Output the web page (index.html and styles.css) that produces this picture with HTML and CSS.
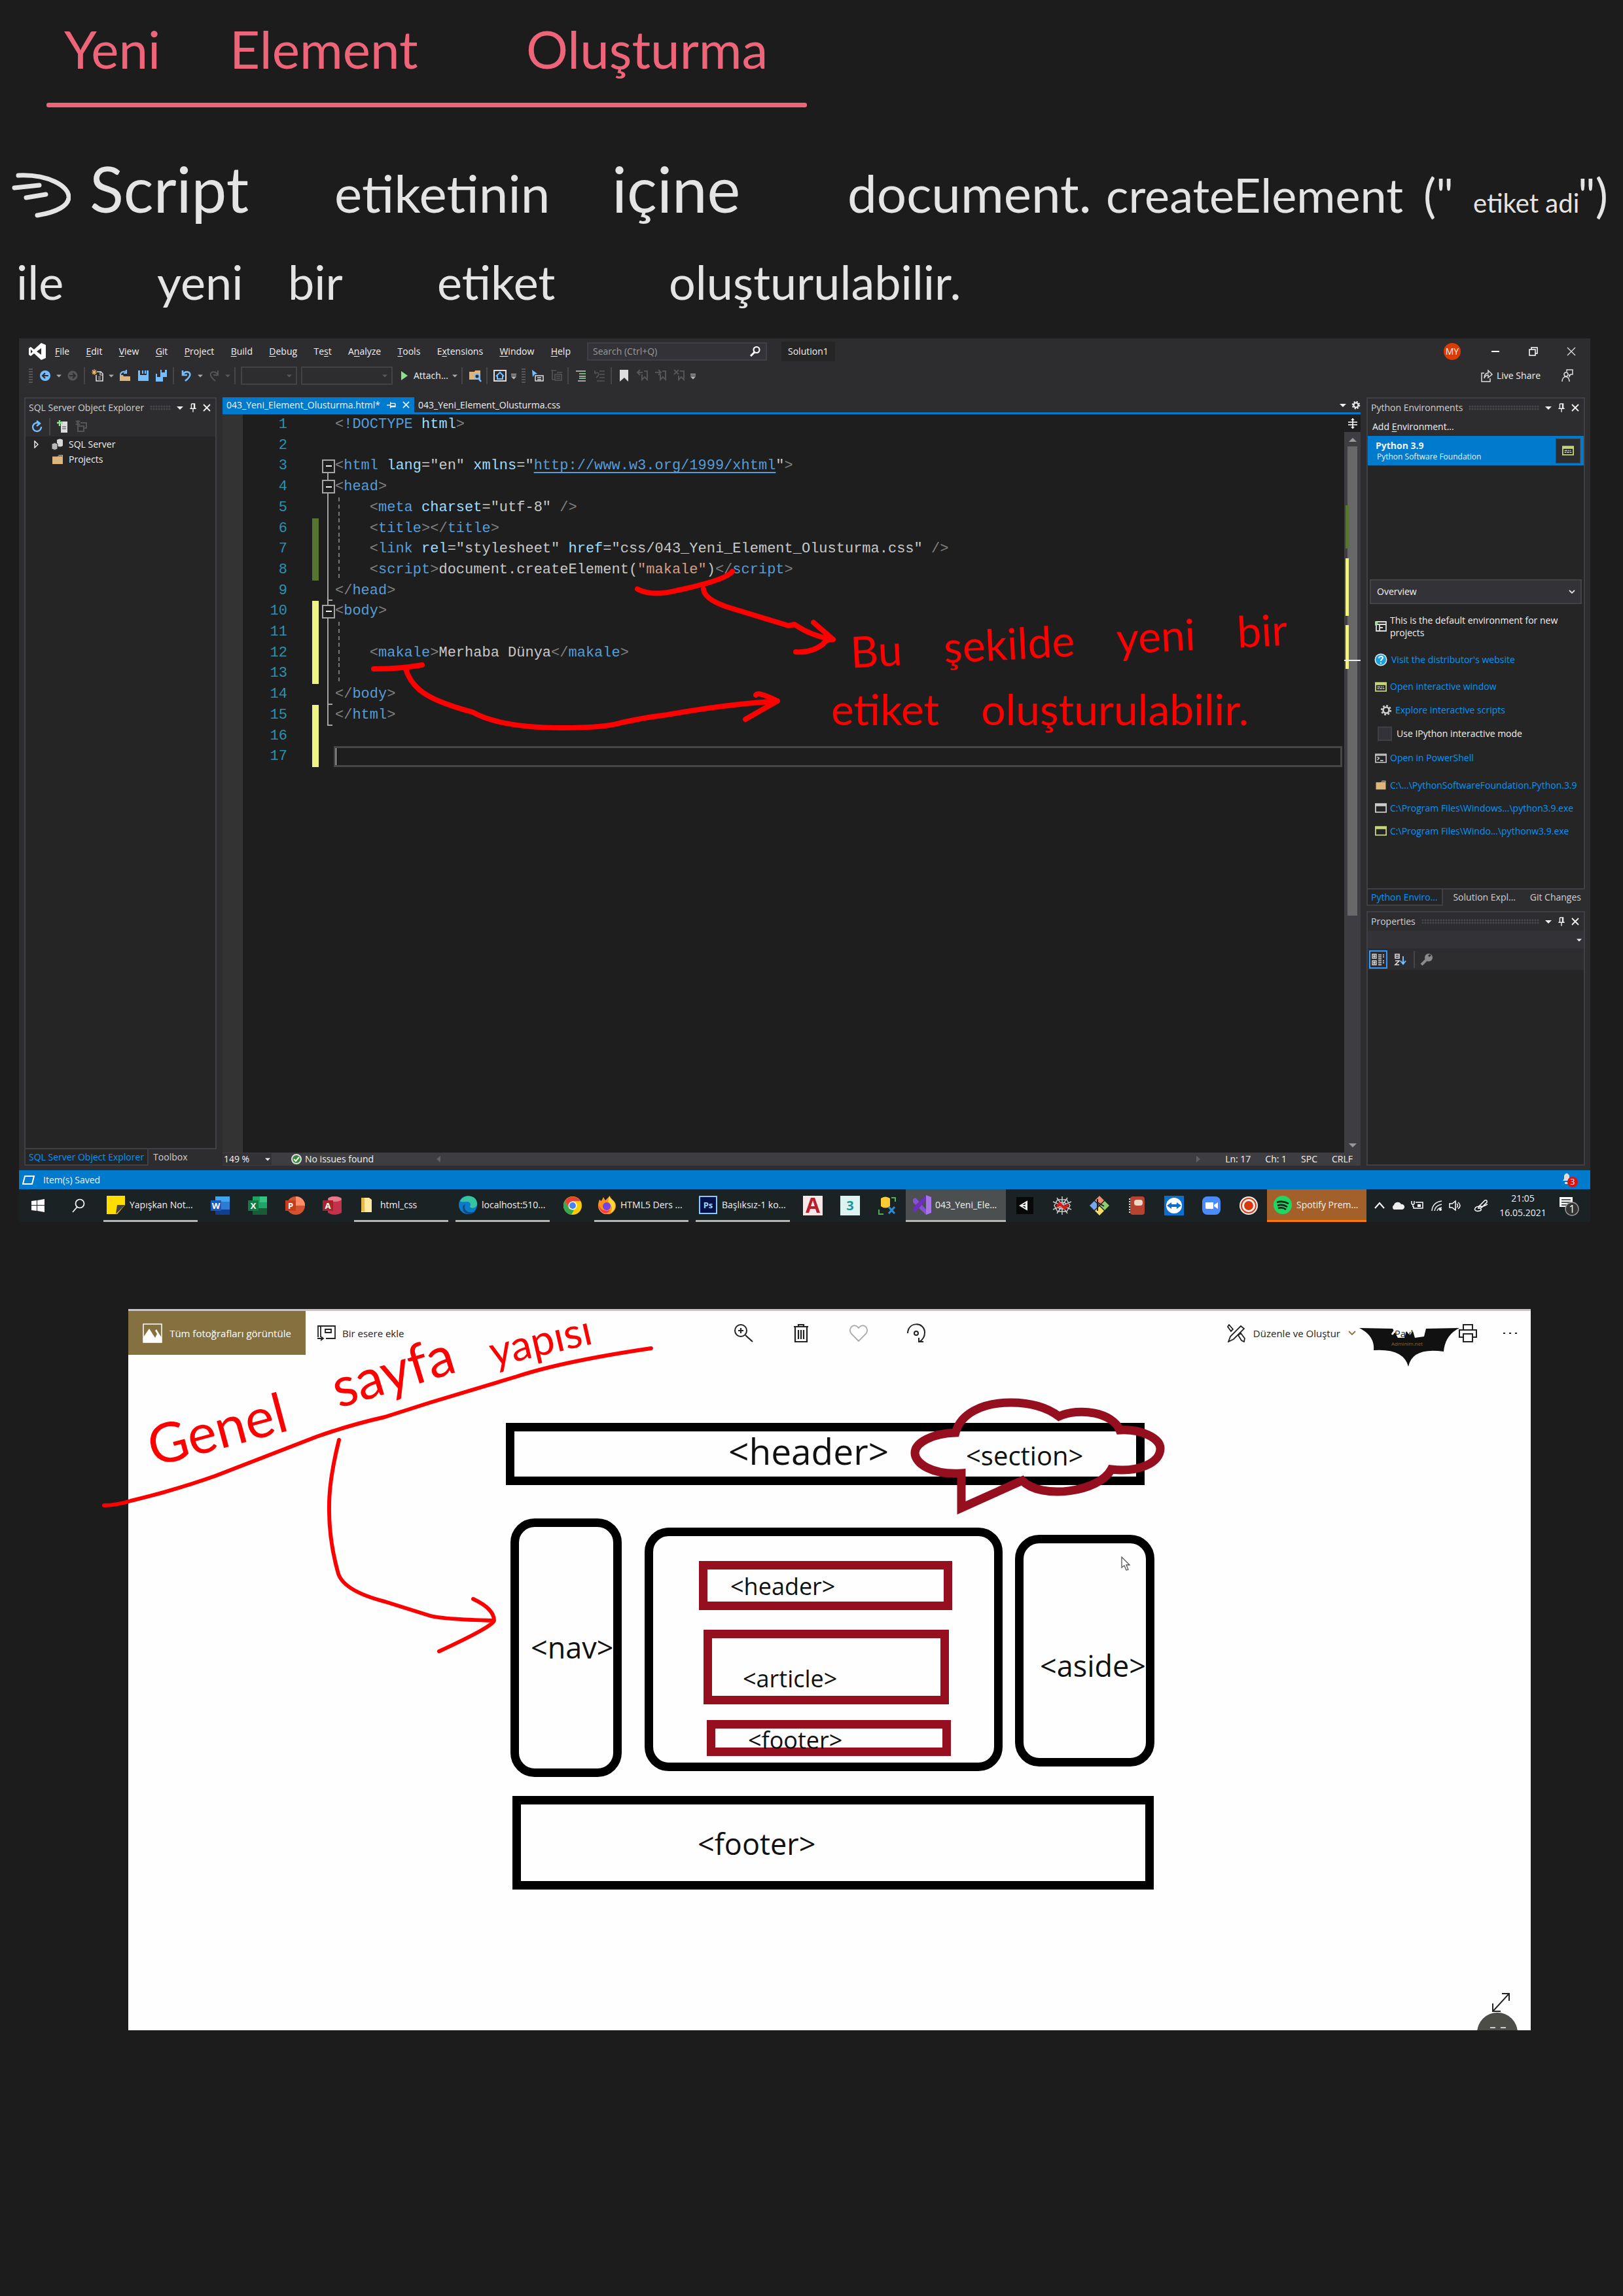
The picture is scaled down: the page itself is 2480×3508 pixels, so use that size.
FILE: index.html
```html
<!DOCTYPE html>
<html lang="tr">
<head>
<meta charset="utf-8">
<title>Yeni Element Oluşturma</title>
<link rel="stylesheet" href="styles.css">
</head>
<body>
<svg class="defs" width="0" height="0" aria-hidden="true">
  <symbol id="caret" viewBox="0 0 10 10"><path d="M0 3h10L5 8z" fill="currentColor"/></symbol>
  <symbol id="pin" viewBox="0 0 14 16"><path d="M4 1h6v8M4 1v8M1.500 9.500h11M7 10v6" fill="none" stroke="currentColor" stroke-width="1.600"/><path d="M8 1h2v8H8z" fill="currentColor"/></symbol>
  <symbol id="cross" viewBox="0 0 12 12"><path d="M1 1l10 10M11 1L1 11" stroke="currentColor" stroke-width="1.800"/></symbol>
  <symbol id="gear" viewBox="0 0 20 20"><circle cx="10" cy="10" r="5" fill="none" stroke="currentColor" stroke-width="3"/><circle cx="10" cy="10" r="7.500" fill="none" stroke="currentColor" stroke-width="3" stroke-dasharray="3 2.890"/></symbol>
  <symbol id="console" viewBox="0 0 20 16"><path d="M1 1h18v14H1z" fill="#252526" stroke="currentColor" stroke-width="2"/><path d="M1 3h18" stroke="currentColor" stroke-width="4"/></symbol>
  <symbol id="lines" viewBox="0 0 20 16"><path d="M4 8h5M10 8h2M4 11h3M8 11h4M13 8h2M13 11h3" stroke="#ccc" stroke-width="1.500"/></symbol>
  <symbol id="folder" viewBox="0 0 20 18"><path d="M1 4h9l2-3h7v16H1z" fill="#dcb67a"/><path d="M11 3h7" stroke="#252526"/></symbol>
  <symbol id="overflow" viewBox="0 0 10 16"><path d="M0 5h10M0 8h10" stroke="#bbb" stroke-width="1.500"/><path d="M0 10h10l-5 5z" fill="#bbb"/></symbol>
  <symbol id="floppy" viewBox="0 0 20 20"><path d="M2 2h3v7h10V2h3v16H2z" fill="#75beff"/><path d="M8 2h2v5H8zM12 2h2v5h-2z" fill="#75beff"/></symbol>
</svg>

<header class="note">
  <h1 class="note-title"><span>Yeni</span><span>Element</span><span>Oluşturma</span></h1>
  <div class="note-rule"></div>
  <p class="note-line first">
    <svg class="implies" width="90" height="70" viewBox="0 0 90 70"><path d="M10 4C55 2 88 20 87 38C86 50 70 60 39 65M4 23l38-4M22 38l30-5" fill="none" stroke="#e4e4e4" stroke-width="7" stroke-linecap="round"/></svg>
    <span class="big">Script</span><span>etiketinin</span><span class="big">içine</span><span>document.</span><span class="call">createElement</span><span class="paren">("</span><span class="arg">etiket adi</span><span class="paren">")</span>
  </p>
  <p class="note-line second"><span>ile</span><span>yeni</span><span>bir</span><span>etiket</span><span>oluşturulabilir.</span></p>
</header>

<section class="ide">
  <div class="titlebar">
    <svg class="vs-logo" width="28" height="28" viewBox="0 0 28 28"><path d="M20 1l7 3v20l-7 3L9 17l-5 4-3-2V9l3-2 5 4zM20 9l-7 5 7 5zM4 11v6l3-3z" fill="#fff" fill-rule="evenodd"/></svg>
    <nav class="menu">
      <button><u>F</u>ile</button><button><u>E</u>dit</button><button><u>V</u>iew</button><button><u>G</u>it</button><button><u>P</u>roject</button><button><u>B</u>uild</button><button><u>D</u>ebug</button><button>Te<u>s</u>t</button><button>A<u>n</u>alyze</button><button><u>T</u>ools</button><button>E<u>x</u>tensions</button><button><u>W</u>indow</button><button><u>H</u>elp</button>
    </nav>
    <label class="search"><input type="text" placeholder="Search (Ctrl+Q)" aria-label="Search"><svg width="18" height="18" viewBox="0 0 18 18"><circle cx="11" cy="6.500" r="4.500" fill="none" stroke="#fff" stroke-width="2.200"/><path d="M8 10l-6 6" stroke="#fff" stroke-width="3"/></svg></label>
    <span class="solution">Solution1</span>
    <div class="window-controls">
      <span class="avatar">MY</span>
      <button aria-label="Minimize"><svg width="14" height="14" viewBox="0 0 14 14"><path d="M1 7h12" stroke="#fff" stroke-width="2"/></svg></button>
      <button aria-label="Restore"><svg width="14" height="14" viewBox="0 0 14 14"><path d="M1 4h9v9H1zM4 4V1h9v9h-3" fill="none" stroke="#fff" stroke-width="1.500"/></svg></button>
      <button aria-label="Close"><svg width="14" height="14" viewBox="0 0 14 14"><path d="M1 1l12 12M13 1L1 13" stroke="#ddd" stroke-width="1.400"/></svg></button>
    </div>
  </div>

  <div class="toolbar">
    <i class="grip"></i>
    <button aria-label="Back"><svg width="20" height="20" viewBox="0 0 20 20"><circle cx="10" cy="10" r="8" fill="#75beff"/><path d="M15 10H6M10 6l-4 4 4 4" fill="none" stroke="#2d2d30" stroke-width="2.200"/></svg></button>
    <svg class="c" width="8" height="8"><use href="#caret"/></svg>
    <button aria-label="Forward"><svg width="20" height="20" viewBox="0 0 20 20"><circle cx="10" cy="10" r="7.500" fill="#555558"/><path d="M5 10h9M10 6l4 4-4 4" fill="none" stroke="#2d2d30" stroke-width="2"/></svg></button>
    <i class="sep"></i>
    <button aria-label="New"><svg width="20" height="20" viewBox="0 0 20 20"><path d="M9 4h6l3 3v11H8V9" fill="none" stroke="#ddd" stroke-width="1.600"/><path d="M14 4v5h4M11 12h4M11 15h4" fill="none" stroke="#ddd" stroke-width="1.200"/><path d="M5 0v9M1 4.500h8M2 1.500l6 6M8 1.500l-6 6" stroke="#e8b878" stroke-width="1.200"/></svg></button>
    <svg class="c" width="8" height="8"><use href="#caret"/></svg>
    <button aria-label="Open"><svg width="20" height="20" viewBox="0 0 20 20"><path d="M2 9h5l1 2h10v7H2z" fill="#dcb67a"/><path d="M3 9c0-5 7-7 9-4M12 1v5H8" fill="none" stroke="#75beff" stroke-width="2.200"/></svg></button>
    <button aria-label="Save"><svg width="20" height="20"><use href="#floppy"/></svg></button>
    <button aria-label="Save all"><svg width="20" height="20" viewBox="0 0 20 20"><path d="M8 1h2v4h5V1h3v11H8zM1 7h2v5h6V9h3v10H1z" fill="#75beff"/></svg></button>
    <i class="sep"></i>
    <button aria-label="Undo"><svg width="20" height="20" viewBox="0 0 20 20"><path d="M4 2v7h7M4 8C10 1 17 5 15 10c-1 4-4 5-7 8" fill="none" stroke="#75beff" stroke-width="2.600"/></svg></button>
    <svg class="c" width="8" height="8"><use href="#caret"/></svg>
    <button aria-label="Redo"><svg width="20" height="20" viewBox="0 0 20 20"><path d="M16 2v7H9M16 8C10 1 3 5 5 10c1 4 4 5 7 8" fill="none" stroke="#555558" stroke-width="2"/></svg></button>
    <svg class="c dim" width="8" height="8"><use href="#caret"/></svg>
    <i class="sep"></i>
    <span class="combo narrow"><select aria-label="Configuration" disabled></select><svg class="dim" width="8" height="8"><use href="#caret"/></svg></span>
    <span class="combo wide"><select aria-label="Platform" disabled></select><svg class="dim" width="8" height="8"><use href="#caret"/></svg></span>
    <button class="attach"><svg width="20" height="20" viewBox="0 0 20 20"><path d="M7 3l10 7-10 7z" fill="#8ae28a"/></svg><span>Attach...</span></button>
    <svg class="c" width="8" height="8"><use href="#caret"/></svg>
    <i class="sep"></i>
    <button aria-label="Find in files"><svg width="20" height="20" viewBox="0 0 20 20"><path d="M1 4h8l1-2h8v14H1z" fill="#dcb67a"/><circle cx="13" cy="11" r="3.500" fill="#2d2d30" stroke="#75beff" stroke-width="2"/><path d="M15 14l4 5" stroke="#75beff" stroke-width="2.500"/></svg></button>
    <i class="sep"></i>
    <button aria-label="Home"><svg width="20" height="20" viewBox="0 0 20 20"><path d="M1 2h18v16H1z" fill="none" stroke="#ddd" stroke-width="2"/><path d="M4 11l6-6 6 6M6 10v5h8v-5" fill="none" stroke="#75beff" stroke-width="2"/></svg></button>
    <svg class="c" width="8" height="18"><use href="#overflow"/></svg>
    <i class="grip"></i>
    <button aria-label="Pointer"><svg width="20" height="20" viewBox="0 0 20 20"><path d="M1 1l8 6-4 1-3 4z" fill="#75beff"/><path d="M6 10h12v8H6zM9 13h6M9 16h6" fill="none" stroke="#ddd" stroke-width="1.500"/></svg></button>
    <button aria-label="Outline"><svg width="20" height="20" viewBox="0 0 20 20"><path d="M2 2h8M4 2v14h4M8 8h10v9H8zM11 5h8M10 11h6M10 14h6" fill="none" stroke="#555558" stroke-width="1.600"/></svg></button>
    <i class="sep"></i>
    <button aria-label="Comment"><svg width="20" height="20" viewBox="0 0 20 20"><path d="M2 3h15M7 11h10M5 18h12" stroke="#ccc" stroke-width="1.500"/><path d="M7 7h10M7 14h10" stroke="#8ae28a" stroke-width="1.500"/></svg></button>
    <button aria-label="Uncomment"><svg width="20" height="20" viewBox="0 0 20 20"><path d="M10 3h8M10 8h8M10 13h8M6 18h12M3 2v5M3 7c6-5 8 2 2 6" fill="none" stroke="#555558" stroke-width="1.600"/></svg></button>
    <i class="sep"></i>
    <button aria-label="Bookmark"><svg width="20" height="20" viewBox="0 0 20 20"><path d="M3 1h13v18l-6-6-7 6z" fill="#ddd"/></svg></button>
    <button aria-label="Previous bookmark"><svg width="20" height="20" viewBox="0 0 20 20"><path d="M12 3h5v13l-4-4-4 4V8M10 5H2M6 1L2 5l4 4" fill="none" stroke="#555558" stroke-width="2"/></svg></button>
    <button aria-label="Next bookmark"><svg width="20" height="20" viewBox="0 0 20 20"><path d="M12 3h5v13l-4-4-4 4V8M1 5h9M6 1l4 4-4 4" fill="none" stroke="#555558" stroke-width="2"/></svg></button>
    <button aria-label="Clear bookmarks"><svg width="20" height="20" viewBox="0 0 20 20"><path d="M11 3h6v13l-4-4-4 4v-6M2 1l7 7M9 1L2 8" fill="none" stroke="#555558" stroke-width="2"/></svg></button>
    <svg class="c" width="8" height="18"><use href="#overflow"/></svg>
    <div class="share">
      <button><svg width="18" height="20" viewBox="0 0 18 20"><path d="M5 6H1v13h13v-5M5 14c0-6 3-8 6-8V2l6 6-6 5V9c-3 0-5 2-6 5z" fill="none" stroke="#ddd" stroke-width="1.500"/></svg><span>Live Share</span></button>
      <button aria-label="Feedback"><svg width="18" height="20" viewBox="0 0 18 20"><path d="M8 4V1h9v7h-3l-2 3V8" fill="none" stroke="#ddd" stroke-width="1.500"/><circle cx="7" cy="8" r="3" fill="none" stroke="#ddd" stroke-width="1.500"/><path d="M1 19c0-10 11-10 11 0" fill="none" stroke="#ddd" stroke-width="1.500"/></svg></button>
    </div>
  </div>

  <div class="workspace">
    <aside class="dock left">
      <div class="panel grow">
        <div class="panel-head"><span>SQL Server Object Explorer</span><i class="dots"></i><svg width="10" height="10"><use href="#caret"/></svg><svg width="12" height="14"><use href="#pin"/></svg><svg width="12" height="12"><use href="#cross"/></svg></div>
        <div class="panel-tools">
          <svg width="20" height="20" viewBox="0 0 20 20"><path d="M13 5a6.500 6.500 0 1 0 3 5M9 1l5 4-5 4" fill="none" stroke="#75beff" stroke-width="2.400"/></svg><i class="sep"></i>
          <svg width="20" height="20" viewBox="0 0 20 20"><path d="M6 2h10v17H6z" fill="#ddd"/><path d="M8 10h6M8 13h6" stroke="#444"/><path d="M4 0v9M0 4h9" stroke="#8ae28a" stroke-width="2.400"/></svg>
          <svg width="20" height="20" viewBox="0 0 20 20"><path d="M8 4h9v8h-4M4 9h9v8H4zM1 1l6 6M7 1L1 7M4 0v8" fill="none" stroke="#555558" stroke-width="2"/></svg>
        </div>
        <ul class="tree">
          <li><svg width="10" height="12" viewBox="0 0 10 12"><path d="M2 1l5 5-5 5z" fill="none" stroke="#fff" stroke-width="1.300"/></svg><svg width="20" height="18" viewBox="0 0 20 18"><path d="M9 2q5-3 9 0v9q-4 3-9 0z" fill="#d8d8d8"/><path d="M1 8q5-3 9 0v8q-4 3-9 0z" fill="#b8b8b8" stroke="#252526"/></svg><span>SQL Server</span></li>
          <li><i></i><svg width="20" height="16"><use href="#folder"/></svg><span>Projects</span></li>
        </ul>
      </div>
      <div class="tabs"><button class="on">SQL Server Object Explorer</button><button>Toolbox</button></div>
    </aside>

    <main class="editor">
      <div class="doc-tabs">
        <button class="doc on"><span>043_Yeni_Element_Olusturma.html*</span><svg class="side" width="12" height="14"><use href="#pin"/></svg><svg width="11" height="11"><use href="#cross"/></svg></button>
        <button class="doc"><span>043_Yeni_Element_Olusturma.css</span></button>
        <div class="doc-end"><svg width="10" height="10"><use href="#caret"/></svg><svg width="14" height="14"><use href="#gear"/></svg></div>
      </div>
      <div class="code-area">
        <div class="code">
          <div class="row"><b>1</b><i></i><em></em><code><s>&lt;</s><q>!DOCTYPE</q> <dfn>html</dfn><s>&gt;</s></code></div>
          <div class="row"><b>2</b><i></i><em></em><code></code></div>
          <div class="row"><b>3</b><i></i><em class="box start"></em><code><s>&lt;</s><q>html</q> <dfn>lang</dfn>="en" <dfn>xmlns</dfn>="<a href="http://www.w3.org/1999/xhtml">http://www.w3.org/1999/xhtml</a>"<s>&gt;</s></code></div>
          <div class="row"><b>4</b><i></i><em class="box"></em><code><s>&lt;</s><q>head</q><s>&gt;</s></code></div>
          <div class="row"><b>5</b><i></i><em class="bar"></em><code class="guide">    <s>&lt;</s><q>meta</q> <dfn>charset</dfn>="utf-8" <s>/&gt;</s></code></div>
          <div class="row"><b>6</b><i class="saved"></i><em class="bar"></em><code class="guide">    <s>&lt;</s><q>title</q><s>&gt;&lt;/</s><q>title</q><s>&gt;</s></code></div>
          <div class="row"><b>7</b><i class="saved"></i><em class="bar"></em><code class="guide">    <s>&lt;</s><q>link</q> <dfn>rel</dfn>="stylesheet" <dfn>href</dfn>="css/043_Yeni_Element_Olusturma.css" <s>/&gt;</s></code></div>
          <div class="row"><b>8</b><i class="saved"></i><em class="bar"></em><code class="guide">    <s>&lt;</s><q>script</q><s>&gt;</s>document.createElement(<var>"makale"</var>)<s>&lt;/</s><q>script</q><s>&gt;</s></code></div>
          <div class="row"><b>9</b><i></i><em class="bar end"></em><code><s>&lt;/</s><q>head</q><s>&gt;</s></code></div>
          <div class="row"><b>10</b><i class="dirty"></i><em class="box"></em><code><s>&lt;</s><q>body</q><s>&gt;</s></code></div>
          <div class="row"><b>11</b><i class="dirty"></i><em class="bar"></em><code class="guide"></code></div>
          <div class="row"><b>12</b><i class="dirty"></i><em class="bar"></em><code class="guide">    <s>&lt;</s><q>makale</q><s>&gt;</s>Merhaba Dünya<s>&lt;/</s><q>makale</q><s>&gt;</s></code></div>
          <div class="row"><b>13</b><i class="dirty"></i><em class="bar"></em><code class="guide"></code></div>
          <div class="row"><b>14</b><i></i><em class="bar end"></em><code><s>&lt;/</s><q>body</q><s>&gt;</s></code></div>
          <div class="row"><b>15</b><i class="dirty"></i><em class="bar end"></em><code><s>&lt;/</s><q>html</q><s>&gt;</s></code></div>
          <div class="row"><b>16</b><i class="dirty"></i><em></em><code></code></div>
          <div class="row"><b>17</b><i class="dirty"></i><em></em><code class="current"></code></div>
        </div>
        <div class="scroll">
          <button class="split" aria-label="Split"><svg width="16" height="18" viewBox="0 0 16 18"><path d="M1 7h14M1 11h14M8 1v16" stroke="#fff" stroke-width="1.600"/><path d="M5 4l3-3 3 3zM5 14l3 3 3-3z" fill="#fff"/></svg></button>
          <svg class="up" width="12" height="8" viewBox="0 0 12 8"><path d="M0 7h12L6 1z" fill="#999"/></svg>
          <div class="thumb"></div>
          <svg class="down" width="12" height="8" viewBox="0 0 12 8"><path d="M0 1h12L6 7z" fill="#999"/></svg>
          <svg class="marks" width="26" height="260" viewBox="0 0 26 260"><path d="M2 0h5v66H2z" fill="#577430"/><path d="M2 81h5v88H2zM2 183h5v67H2z" fill="#eff284"/><path d="M0 236h25v2H0z" fill="#eee"/></svg>
        </div>
      </div>
      <div class="editor-foot">
        <button class="zoom">149 %<svg width="8" height="8"><use href="#caret"/></svg></button>
        <svg width="16" height="16" viewBox="0 0 16 16"><circle cx="8" cy="8" r="7" fill="#388a34" stroke="#ddd" stroke-width="2"/><path d="M4 8l3 3 5-6" fill="none" stroke="#fff" stroke-width="2"/></svg>
        <span>No issues found</span>
        <svg class="hl" width="6" height="10" viewBox="0 0 6 10"><path d="M6 0v10L0 5z" fill="#606065"/></svg>
        <svg class="hr" width="6" height="10" viewBox="0 0 6 10"><path d="M0 0v10l6-5z" fill="#606065"/></svg>
        <span class="stat">Ln: 17</span><span class="stat">Ch: 1</span><span class="stat">SPC</span><span class="stat">CRLF</span>
      </div>
    </main>

    <aside class="dock right">
      <div class="panel env">
        <div class="panel-head"><span>Python Environments</span><i class="dots"></i><svg width="10" height="10"><use href="#caret"/></svg><svg width="12" height="14"><use href="#pin"/></svg><svg width="12" height="12"><use href="#cross"/></svg></div>
        <button class="add-env">Add <u>E</u>nvironment...</button>
        <div class="env-item"><div><strong>Python 3.9</strong><small>Python Software Foundation</small></div><button aria-label="Interactive"><svg class="lime" width="18" height="15"><use href="#console"/><use href="#lines"/></svg></button></div>
        <div class="overview"><select aria-label="Section"><option>Overview</option></select><svg width="10" height="6" viewBox="0 0 10 6"><path d="M1 1l4 4 4-4" fill="none" stroke="#ddd" stroke-width="1.800"/></svg></div>
        <div class="env-list">
          <div class="env-row default"><svg width="18" height="18" viewBox="0 0 18 18"><path d="M2 2h15v14H2zM2 6h15M7 6v10M7 11h5" fill="none" stroke="#ddd" stroke-width="1.800"/><path d="M0 1l5 3-5 4z" fill="#8ae28a"/></svg><span>This is the default environment for new projects</span></div>
          <a class="env-row visit" href="#site"><svg width="20" height="20" viewBox="0 0 20 20"><circle cx="10" cy="10" r="9.500" fill="#eee"/><circle cx="10" cy="10" r="8" fill="#1ba1e2"/><path d="M7 8c0-4 6-4 6-1 0 2-3 2-3 5M10 14v2" fill="none" stroke="#fff" stroke-width="2"/></svg>Visit the distributor's website</a>
          <a class="env-row" href="#window"><svg class="lime" width="18" height="15"><use href="#console"/><use href="#lines"/></svg>Open interactive window</a>
          <a class="env-row sub" href="#scripts"><svg class="pale-icon" width="18" height="18"><use href="#gear"/></svg>Explore interactive scripts</a>
          <label class="env-row check"><input type="checkbox">Use IPython interactive mode</label>
          <a class="env-row shell" href="#shell"><svg width="18" height="15" viewBox="0 0 20 16"><path d="M1 1h18v14H1zM4 6l3 2-3 3M9 12h5M1 3h18" fill="none" stroke="#ccc" stroke-width="1.800"/></svg>Open in PowerShell</a>
          <a class="env-row path" href="#dir"><svg width="18" height="15"><use href="#folder"/></svg>C:\...\PythonSoftwareFoundation.Python.3.9</a>
          <a class="env-row path" href="#exe"><svg class="pale-icon" width="18" height="15"><use href="#console"/></svg>C:\Program Files\Windows...\python3.9.exe</a>
          <a class="env-row path" href="#exew"><svg class="lime" width="18" height="15"><use href="#console"/></svg>C:\Program Files\Windo...\pythonw3.9.exe</a>
        </div>
      </div>
      <div class="tabs"><button class="on">Python Enviro...</button><button>Solution Expl...</button><button>Git Changes</button></div>
      <div class="panel props">
        <div class="panel-head"><span>Properties</span><i class="dots"></i><svg width="10" height="10"><use href="#caret"/></svg><svg width="12" height="14"><use href="#pin"/></svg><svg width="12" height="12"><use href="#cross"/></svg></div>
        <div class="props-pick"><svg width="8" height="8"><use href="#caret"/></svg></div>
        <div class="props-tools">
          <button class="sel" aria-label="Categorized"><svg width="20" height="20" viewBox="0 0 20 20"><path d="M1 2h6v6H1zM1 12h6v6H1zM2 5h4M4 3v4M2 15h4M4 13v4M10 3h5M10 6h5M10 9h5M10 12h5M10 15h5M10 18h5M17 3h2M17 6h2M17 12h2M17 15h2" fill="none" stroke="#ddd" stroke-width="1.300"/></svg></button>
          <button aria-label="Alphabetical"><svg width="20" height="20" viewBox="0 0 20 20"><path d="M2 2h6v6H2zM3 5h4M2 12h6l-6 6h6" fill="none" stroke="#ddd" stroke-width="1.600"/><path d="M14 5v11M10 12l4 5 4-5" fill="none" stroke="#75beff" stroke-width="2"/></svg></button>
          <i class="sep"></i>
          <button aria-label="Property pages"><svg width="20" height="20" viewBox="0 0 20 20"><path d="M2 18l8-8" stroke="#8a8a8a" stroke-width="4"/><circle cx="13" cy="7" r="6" fill="#8a8a8a"/><path d="M13 5l3-2" stroke="#2d2d30" stroke-width="3"/></svg></button>
        </div>
        <div class="props-body"></div>
      </div>
    </aside>
  </div>

  <div class="statusbar">
    <svg width="20" height="14" viewBox="0 0 20 14"><path d="M4 1h14l-3 12H1z" fill="none" stroke="#fff" stroke-width="2"/></svg><span>Item(s) Saved</span>
    <svg class="bell" width="28" height="24" viewBox="0 0 28 24"><path d="M4 13l2-3V5q4-7 8 0v5l2 3zM7 15h6v3H7z" fill="#ddd"/><circle cx="19" cy="15" r="8" fill="#e01010"/><text x="19" y="19" text-anchor="middle" class="badge">3</text></svg>
  </div>

  <footer class="taskbar">
    <button aria-label="Start"><svg width="22" height="22" viewBox="0 0 22 22"><path d="M1 4l8-1v7H1zM10 3l11-2v9H10zM1 11h8v8l-8-1zM10 11h11v10l-11-2z" fill="#fff"/></svg></button>
    <button class="find" aria-label="Search"><svg width="22" height="22" viewBox="0 0 22 22"><circle cx="13" cy="8" r="6.500" fill="none" stroke="#fff" stroke-width="1.700"/><path d="M9 13l-7 8" stroke="#fff" stroke-width="1.700"/></svg></button>
    <button class="win"><svg width="28" height="28" viewBox="0 0 28 28"><path d="M0 0h28v14L16 28H0z" fill="#fd0"/><path d="M14 28l2-14h12z" fill="#444"/></svg><span>Yapışkan Not...</span></button>
    <button aria-label="Word"><svg width="30" height="28" viewBox="0 0 30 28"><path d="M7 0h22v28H7z" fill="#2b7cd3"/><path d="M7 0h22v8H7z" fill="#41a5ee"/><path d="M7 20h22v8H7z" fill="#103f91"/><path d="M0 6h16v16H0z" fill="#185abd"/><text x="8" y="19" text-anchor="middle" class="glyph">W</text></svg></button>
    <button aria-label="Excel"><svg width="30" height="28" viewBox="0 0 30 28"><path d="M7 0h22v28H7z" fill="#21a366"/><path d="M18 0h11v9H18z" fill="#33c481"/><path d="M7 18h22v10H7z" fill="#185c37"/><path d="M0 6h16v16H0z" fill="#107c41"/><text x="8" y="19" text-anchor="middle" class="glyph">X</text></svg></button>
    <button aria-label="PowerPoint"><svg width="30" height="28" viewBox="0 0 30 28"><circle cx="16" cy="14" r="14" fill="#d35230"/><path d="M16 0a14 14 0 0 1 14 14H16z" fill="#ff8f6b"/><path d="M0 6h16v16H0z" fill="#c43e1c"/><text x="8" y="19" text-anchor="middle" class="glyph">P</text></svg></button>
    <button aria-label="Access"><svg width="30" height="28" viewBox="0 0 30 28"><path d="M8 3q10-6 21 0v22q-10 6-21 0z" fill="#c4314b"/><ellipse cx="18.500" cy="4" rx="10.500" ry="4" fill="#e8788b"/><path d="M0 6h16v16H0z" fill="#a4262c"/><text x="8" y="19" text-anchor="middle" class="glyph">A</text></svg></button>
    <button class="win"><svg width="28" height="28" viewBox="0 0 28 28"><path d="M6 3h12l4 3v19H6z" fill="#ffe9a0"/><path d="M6 3h5v22l-5-2z" fill="#e8b84a"/></svg><span>html_css</span></button>
    <button class="win"><svg width="28" height="28" viewBox="0 0 28 28"><circle cx="14" cy="14" r="14" fill="#0c7bc8"/><path d="M2 8C7-3 28-2 28 12c0 8-11 8-11 4 2-2 1-7-4-7S3 10 2 8z" fill="#35c6a0"/><path d="M10 13c-4 8 4 15 15 11-6 7-19 4-19-5 0-4 2-6 4-6z" fill="#114a8b"/></svg><span>localhost:510...</span></button>
    <button aria-label="Chrome"><svg width="28" height="28" viewBox="0 0 28 28"><circle cx="14" cy="14" r="14" fill="#fc0"/><path d="M2 7a14 14 0 0 1 24 0H14l-6 10z" fill="#ea4335"/><path d="M2 7l7 12 7 2-4 7A14 14 0 0 1 2 7z" fill="#34a853"/><circle cx="14" cy="14" r="6.500" fill="#fff"/><circle cx="14" cy="14" r="5" fill="#4285f4"/></svg></button>
    <button class="win"><svg width="28" height="28" viewBox="0 0 28 28"><path d="M3 6l3 2 3-6 3 5 7-7c0 5 9 7 9 15a13 13 0 0 1-27 0c0-4 1-6 2-9z" fill="#ff9020"/><path d="M18 0c0 5 9 7 9 15 0 5-3 9-7 11 5-9-1-15-4-17z" fill="#ffd83a"/><circle cx="14" cy="16" r="6" fill="#7542e5"/><path d="M2 14c3 8 9 10 17 8-4 8-16 5-17-8z" fill="#ff3750"/></svg><span>HTML5 Ders ...</span></button>
    <button class="win ps"><svg width="28" height="28" viewBox="0 0 28 28"><path d="M1 1h26v26H1z" fill="#001248" stroke="#8bc7ff" stroke-width="2"/><text x="14" y="19" text-anchor="middle" class="glyph pale">Ps</text></svg><span>Başlıksız-1 ko...</span></button>
    <button aria-label="AutoCAD"><svg width="30" height="30" viewBox="0 0 30 30"><path d="M0 0h30v30H0z" fill="#f6e8e6"/><path d="M4 26L12 3h6l8 23h-5l-2-6h-8l-2 6zM12 16h6l-3-9z" fill="#b5202a" fill-rule="evenodd"/></svg></button>
    <button aria-label="3ds Max"><svg width="30" height="30" viewBox="0 0 30 30"><path d="M0 0h30v30H0z" fill="#def2f2"/><text x="15" y="22" text-anchor="middle" class="three">3</text></svg></button>
    <button aria-label="Database"><svg width="28" height="28" viewBox="0 0 28 28"><path d="M4 3q7-5 14 0v12q-7 5-14 0z" fill="#fc3"/><path d="M16 16l9 10M25 16l-9 10" stroke="#2a8fd8" stroke-width="3"/><path d="M20 2h6v6M1 20v7h7" fill="none" stroke="#4caf50" stroke-width="2"/></svg></button>
    <button class="win active"><svg width="30" height="30" viewBox="0 0 30 30"><path d="M21 0l8 3v24l-8 3z" fill="#a774e8"/><path d="M1 6l4-2 16 18v8L1 11z" fill="#8a4fd8"/><path d="M1 24l4 2L21 8V0L1 19z" fill="#6b2fb8"/></svg><span>043_Yeni_Ele...</span></button>
    <button class="small" aria-label="Unity"><svg width="26" height="26" viewBox="0 0 26 26"><path d="M0 0h26v26H0z" fill="#080808"/><path d="M6 13l10-6v12zM6 13h8M16 7l-2 6 2 6" fill="none" stroke="#eee" stroke-width="2"/></svg></button>
    <button class="small" aria-label="Spider"><svg width="30" height="30" viewBox="0 0 30 30"><path d="M15 1v28M1 9l28 12M1 21L29 9M7 3l16 24M23 3L7 27M8 6h14l5 9-5 9H8l-5-9zM11 10h8l3 5-3 5h-8l-3-5z" fill="none" stroke="#ccc" stroke-width="1.500"/><path d="M7 17l4-5 8 7 5-6" fill="none" stroke="#e01818" stroke-width="4"/></svg></button>
    <button class="small" aria-label="Git"><svg width="30" height="30" viewBox="0 0 30 30"><path d="M15 0l7 7-7 7-7-7z" fill="#f08a70"/><path d="M7 8l7 7-7 7-7-7z" fill="#75a7f0"/><path d="M23 8l7 7-7 7-7-7z" fill="#8bd06a"/><path d="M15 16l7 7-7 7-7-7z" fill="#f6dc68"/><path d="M12 5v18M12 10l10 6" stroke="#222" stroke-width="2"/></svg></button>
    <button class="small" aria-label="Notes"><svg width="26" height="28" viewBox="0 0 26 28"><rect x="3" width="22" height="28" rx="4" fill="#b5432f"/><path d="M2 3v24" stroke="#ddd" stroke-width="2" stroke-dasharray="2 2"/><rect x="9" y="5" width="13" height="9" rx="4" fill="#ecd9c8"/></svg></button>
    <button class="small" aria-label="TeamViewer"><svg width="30" height="30" viewBox="0 0 30 30"><path d="M0 0h30v30H0z" fill="#0b6fd0"/><circle cx="15" cy="15" r="12" fill="#fff"/><path d="M4 15l7-5v3h8v-3l7 5-7 5v-3h-8v3z" fill="#0b6fd0"/></svg></button>
    <button class="small" aria-label="Zoom"><svg width="28" height="28" viewBox="0 0 28 28"><rect width="28" height="28" rx="8" fill="#4a8cff"/><path d="M5 9h12v10H7q-2 0-2-2zM18 13l6-4v10l-6-4z" fill="#fff"/></svg></button>
    <button class="small" aria-label="Record"><svg width="28" height="28" viewBox="0 0 28 28"><circle cx="14" cy="14" r="14" fill="#f4f0ec"/><circle cx="14" cy="14" r="11" fill="none" stroke="#d04020" stroke-width="2"/><circle cx="14" cy="14" r="7" fill="#d83810"/></svg></button>
    <button class="win spotify"><svg width="28" height="28" viewBox="0 0 28 28"><circle cx="14" cy="14" r="14" fill="#1ed760"/><path d="M5 10q9-3 18 2M6 15q8-3 15 2M7 19q7-2 12 2" fill="none" stroke="#162018" stroke-width="2.500"/></svg><span>Spotify Prem...</span></button>
    <div class="tray">
      <svg width="16" height="16" viewBox="0 0 16 16"><path d="M1 12l7-8 7 8" fill="none" stroke="#fff" stroke-width="2"/></svg>
      <svg width="20" height="16" viewBox="0 0 20 16"><path d="M4 14a4 4 0 0 1 0-7 6 6 0 0 1 11-1 4 4 0 0 1 2 8z" fill="#eee"/></svg>
      <svg width="20" height="16" viewBox="0 0 20 16"><path d="M7 3h11v9H4V9M1 1v4q2 3 4 0V1M3 6v4" fill="none" stroke="#fff" stroke-width="1.500"/><path d="M10 6h5v4h-5z" fill="#fff"/></svg>
      <svg width="18" height="18" viewBox="0 0 18 18"><path d="M2 17Q3 4 17 2M6 17Q7 9 17 7M10 17q1-4 7-5" fill="none" stroke="#eee" stroke-width="1.500"/><circle cx="15" cy="15" r="2" fill="#fff"/></svg>
      <svg width="20" height="18" viewBox="0 0 20 18"><path d="M1 6h4l5-4v14l-5-4H1zM12 6q3 3 0 6M14 4q6 5 0 10" fill="none" stroke="#fff" stroke-width="1.500"/></svg>
      <svg class="pen" width="22" height="20" viewBox="0 0 22 20"><path d="M8 11l9-9q4-1 3 3l-8 8-5 1zM10 14q3 3-1 4c-4 1-9 0-7-4 1-3 7-3 9-3 5 1 7-2 10-3" fill="none" stroke="#fff" stroke-width="1.500"/></svg>
      <div class="clock"><span>21:05</span><span>16.05.2021</span></div>
      <svg class="action" width="34" height="34" viewBox="0 0 34 34"><path d="M2 4h20v15h-5l-4 4v-4H2z" fill="#fff"/><path d="M5 8h14M5 12h14M5 16h8" stroke="#222" stroke-width="1.500"/><circle cx="21" cy="22" r="10" fill="#333" stroke="#999" stroke-width="1.500"/><text x="21" y="28" text-anchor="middle" class="count">1</text></svg>
    </div>
  </footer>

  <svg class="ink" viewBox="29 517 2401 1350" fill="none" stroke="#f00" stroke-width="8" stroke-linecap="round" stroke-linejoin="round">
    <path d="M974 900Q996 912 1035 902Q1110 886 1119 873"/>
    <path d="M1075 900Q1076 915 1110 927L1205 956L1214 954Q1240 972 1273 977M1243 951L1273 977Q1260 978 1258 984Q1240 998 1216 996"/>
    <path d="M571 1022Q610 1022 645 1016M620 1022Q625 1040 641 1054Q662 1072 722 1088Q765 1112 860 1112Q925 1112 950 1104Q985 1096 1020 1092Q1110 1076 1188 1071M1155 1062Q1158 1056 1188 1071L1139 1099"/>
  </svg>
  <p class="hand ide-hand upper"><span>Bu</span><span>şekilde</span><span>yeni</span><span>bir</span></p>
  <p class="hand ide-hand lower"><span>etiket</span><span>oluşturulabilir.</span></p>
</section>

<section class="photos">
  <div class="photo-bar">
    <div class="photo-left">
      <button class="all"><svg width="30" height="30" viewBox="0 0 30 30"><path d="M1 1h28v28H1z" fill="none" stroke="#fff" stroke-width="1.500"/><path d="M1 29V21L10 8l9 14 3-6-3-5 2-2 8 13v7z" fill="#fff"/></svg><span>Tüm fotoğrafları görüntüle</span></button>
      <button class="add"><svg width="28" height="24" viewBox="0 0 28 24"><path d="M6 1h21v19H13M6 1H1v17M5 1v17M12 6h9v5h-9zM0 20h8M5 17l4 3-4 3" fill="none" stroke="#222" stroke-width="1.800"/></svg><span>Bir esere ekle</span></button>
    </div>
    <div class="photo-mid">
      <button aria-label="Yakınlaştır"><svg width="30" height="30" viewBox="0 0 30 30"><circle cx="11" cy="11" r="9" fill="none" stroke="#222" stroke-width="2"/><path d="M18 18l11 10M7 11h8M11 7v8" stroke="#222" stroke-width="2.200"/></svg></button>
      <button aria-label="Sil"><svg width="24" height="30" viewBox="0 0 24 30"><path d="M1 5h22M8 5V2h8v3M3 5v23h18V5M8 10v14M12 10v14M16 10v14" fill="none" stroke="#222" stroke-width="2.200"/></svg></button>
      <button aria-label="Favori"><svg width="30" height="28" viewBox="0 0 30 28"><path d="M15 26L4 15C-3 6 9-3 15 6 21-3 33 6 26 15z" fill="none" stroke="#aaa" stroke-width="1.800"/></svg></button>
      <button aria-label="Döndür"><svg width="30" height="30" viewBox="0 0 30 30"><path d="M2 15C2-3 28-3 28 14q0 9-8 14M19 22v6h7" fill="none" stroke="#222" stroke-width="2"/><circle cx="15" cy="15" r="3" fill="none" stroke="#222" stroke-width="2"/></svg></button>
    </div>
    <div class="photo-right">
      <button class="edit"><svg width="28" height="28" viewBox="0 0 28 28"><path d="M2 27l3-8L21 3l5 4L10 23zM3 1l6 7-3 3-5-7zM17 17l4-3 6 8-1 5-4-2z" fill="none" stroke="#222" stroke-width="1.800"/></svg><span>Düzenle ve Oluştur</span><svg width="12" height="8" viewBox="0 0 12 8"><path d="M1 1l5 5 5-5" fill="none" stroke="#8a7440" stroke-width="1.800"/></svg></button>
      <button class="pay"><span>Payl</span></button>
      <button class="print" aria-label="Yazdır"><svg width="30" height="28" viewBox="0 0 30 28"><path d="M8 9V1h14v8M8 20H2V9h26v11h-6M8 15h14v12H8z" fill="none" stroke="#222" stroke-width="2"/></svg></button>
      <button class="more" aria-label="Diğer"><svg width="22" height="4" viewBox="0 0 22 4"><path d="M0 1h3v2H0zM9 1h3v2H9zM18 1h3v2h-3z" fill="#222"/></svg></button>
      <svg class="bat" width="154" height="62" viewBox="2077 2028 154 62"><path d="M2077 2029L2128 2030L2136 2044L2146 2044L2149 2034L2154 2040L2159 2034L2162 2044L2176 2042L2179 2030L2230 2029Q2208 2040 2206 2065Q2158 2058 2152 2088Q2145 2060 2099 2063Q2101 2041 2077 2029z" fill="#111"/><path d="M2125 2022l7 10-5 7" fill="none" stroke="#fff" stroke-width="3"/><text x="2126" y="2056" class="bat-text">Adminim.net</text></svg>
    </div>
  </div>

  <div class="diagram">
    <div class="node n-header"><span>&lt;header&gt;</span></div>
    <div class="node round n-nav"><span>&lt;nav&gt;</span></div>
    <div class="node round n-main"></div>
    <div class="node round n-aside"><span>&lt;aside&gt;</span></div>
    <div class="node red n-in-header"><span>&lt;header&gt;</span></div>
    <div class="node red n-article"><span>&lt;article&gt;</span></div>
    <div class="node red n-in-footer"><span>&lt;footer&gt;</span></div>
    <div class="node n-footer"><span>&lt;footer&gt;</span></div>
    <svg class="cloud" viewBox="1390 2130 400 190" width="400" height="190"><path d="M1460 2189C1468 2160 1500 2143 1545 2143Q1590 2143 1618 2164C1650 2150 1700 2158 1711 2185C1745 2183 1773 2198 1773 2213C1773 2235 1740 2250 1698 2245C1680 2280 1590 2292 1562 2262L1469 2304V2251C1425 2254 1398 2236 1398 2220C1398 2204 1425 2190 1460 2189z" fill="none" stroke="#960f1f" stroke-width="13"/></svg>
    <span class="section-label">&lt;section&gt;</span>
    <svg class="cursor" width="14" height="22" viewBox="0 0 14 22"><path d="M1 1v16l4-3 3 7 3-1-3-7h5z" fill="#fff" stroke="#555" stroke-width="1.300"/></svg>
  </div>

  <div class="corner"><svg width="62" height="58" viewBox="0 0 62 58"><circle cx="31" cy="62" r="31" fill="#4c4c48"/><path d="M20 54h8M36 54h8" stroke="#ccc" stroke-width="2"/><path d="M25 28L48 3M38 2h11v11M24 17v12h12" fill="none" stroke="#222" stroke-width="2"/></svg></div>

  <svg class="ink" viewBox="196 2000 2143 1102" fill="none" stroke="#f00" stroke-width="6" stroke-linecap="round" stroke-linejoin="round">
    <path d="M159 2300Q178 2300 200 2293Q270 2276 329 2255L484 2195Q535 2177 588 2165L657 2143L790 2103Q860 2080 995 2060"/>
    <path d="M518 2200Q503 2260 503 2300Q502 2350 516 2401Q522 2430 588 2447L655 2468Q672 2474 754 2476M723 2443Q755 2458 755 2476Q755 2484 671 2523"/>
  </svg>
  <span class="hand photo-hand genel">Genel</span>
  <span class="hand photo-hand sayfa">sayfa</span>
  <span class="hand photo-hand yapisi">yapısı</span>
</section>
</body>
</html>
```
FILE: styles.css
```css
* { box-sizing: border-box; }
body { margin: 0; min-height: 100vh; background: #1c1c1c; color: #f1f1f1; font: 14px/20px "Open Sans", "Noto Sans", sans-serif; padding-bottom: 406px; overflow-x: hidden; }
button { font: inherit; color: inherit; background: none; border: 0; padding: 0; display: flex; align-items: center; justify-content: center; white-space: nowrap; }
h1, p, ul { margin: 0; padding: 0; }
svg { flex: none; display: block; }
.defs { position: absolute; }
i, em { font-style: normal; }

/* handwritten notes */
.note { height: 517px; font-family: Lato, sans-serif; }
.note-title { display: flex; padding: 24px 0 0 98px; font-size: 80px; line-height: 100px; font-weight: 400; color: #ee6579; }
.note-title span:nth-child(1) { width: 253px; }
.note-title span:nth-child(2) { width: 453px; }
.note-rule { width: 1162px; height: 7px; margin: 33px 0 0 71px; background: #ee6579; border-radius: 3px; }
.note-line { display: grid; color: #e4e4e4; align-items: baseline; white-space: nowrap; line-height: 100px; }
.first { margin-top: 74px; padding-left: 18px; font-size: 80px; grid-template-columns: 119px 374px 424px 360px 395px 485px 76px 160px 60px; }
.implies { align-self: center; }
.big { font-size: 96px; }
.call { font-size: 72px; }
.arg { font-size: 40px; }
.paren { font-size: 72px; }
.second { margin-top: 20px; padding-left: 25px; font-size: 72px; grid-template-columns: 215px 200px 228px 354px 1fr; }

/* IDE window */
.ide { position: relative; margin: 0 50px 0 29px; background: #2d2d30; }
.titlebar { display: flex; align-items: center; height: 42px; padding: 0 0 2px 14px; }
.menu { display: flex; justify-content: space-between; width: 788px; margin: 0 25px 0 13px; }
.menu u, .add-env u { text-underline-offset: 2px; }
.search { display: flex; align-items: center; width: 275px; height: 28px; padding: 0 7px; background: #333337; border: 2px solid #3f3f46; }
.search input { flex: 1; min-width: 0; padding: 0; border: 0; outline: 0; background: none; font: inherit; color: #999; }
.search input::placeholder { color: #999; opacity: 1; }
.solution { margin-left: 22px; padding: 5px 10px; background: #252526; }
.window-controls { display: flex; align-items: center; margin-left: auto; }
.window-controls button { width: 58px; height: 30px; }
.avatar { width: 26px; height: 26px; margin-right: 24px; border-radius: 50%; background: #da3b01; text-align: center; line-height: 26px; }
.toolbar { display: flex; align-items: center; gap: 6px; height: 48px; padding: 0 8px 18px 13px; }
.toolbar button { min-width: 22px; height: 22px; }
.grip { width: 10px; height: 22px; background: repeating-linear-gradient(#56565a 0 2px, transparent 2px 4px); background-clip: content-box; padding: 0 2px; }
.sep { width: 4px; height: 26px; border-left: 2px solid #46464a; }
.c { color: #aaa; }
.dim { color: #5a5a5e; }
.combo { display: flex; align-items: center; justify-content: flex-end; height: 28px; padding-right: 6px; border: 2px solid #434346; }
.combo select { appearance: none; flex: 1; min-width: 0; height: 20px; border: 0; background: none; }
.combo.narrow { width: 86px; }
.combo.wide { width: 140px; }
.attach { gap: 6px; }
.share { display: flex; gap: 30px; align-items: center; margin-left: auto; padding-right: 16px; }
.share button { gap: 6px; }

.workspace { display: grid; grid-template-columns: 294px 1fr 334px; column-gap: 9px; height: 1174px; padding: 0 8px; }
.dock { display: flex; flex-direction: column; min-width: 0; }
.panel { border: 2px solid #3f3f46; background: #252526; display: flex; flex-direction: column; }
.grow { flex: 1; }
.panel-head { display: flex; align-items: center; gap: 9px; height: 28px; padding: 0 7px 0 5px; background: #2d2d30; white-space: nowrap; color: #d0d0d0; }
.panel-head svg { color: #f1f1f1; }
.dots { flex: 1; height: 8px; background: radial-gradient(#46464a 1px, transparent 2px) 0 0 / 4px 4px; }
.panel-tools { display: flex; align-items: center; gap: 8px; height: 30px; padding-left: 8px; background: #2d2d30; }
.tree { list-style: none; }
.tree li { display: grid; grid-template-columns: 10px 20px 1fr; align-items: center; padding-left: 12px; height: 23px; column-gap: 17px; }
.tree span { margin-left: -10px; }
.tabs { display: flex; height: 25px; white-space: nowrap; color: #d0d0d0; }
.tabs button { padding: 0 7px; height: 23px; }
.tabs .on { color: #0097fb; background: #252526; border: 2px solid #3f3f46; border-top: 0; height: 25px; padding: 0 5px; }

.editor { display: flex; flex-direction: column; min-width: 0; }
.doc-tabs { display: flex; height: 26px; border-bottom: 3px solid #007acc; }
.doc { padding: 0 5px 0 6px; }
.doc.on { background: #007acc; gap: 11px; width: 293px; justify-content: space-between; padding-right: 8px; }
.side { rotate: 90deg; }
.doc-end { display: flex; align-items: center; gap: 8px; margin-left: auto; }
.code-area { flex: 1; display: grid; grid-template-columns: 1fr 25px; background: linear-gradient(90deg, #333333 31px, #1e1e1e 31px); }
.code { display: flex; flex-direction: column; height: 539px; font: 22px/32px "Liberation Mono", monospace; color: #c8c8c8; }
.row { flex: 1; display: grid; grid-template-columns: 99px 38px 10px 25px 1fr; grid-template-rows: 100%; min-height: 0; }
.row b { grid-column: 1; font-weight: 400; color: #2b91af; text-align: right; }
.row i { grid-column: 3; }
.row em { grid-column: 4; }
.row code { grid-column: 5; font: inherit; white-space: pre; }
.saved { background: #577430; }
.dirty { background: #eff284; }
.box { display: flex; align-items: center; background: linear-gradient(#a5a5a5, #a5a5a5) 13px 0 / 2px 100% no-repeat; padding-left: 5px; }
.box.start { background-position: 13px 24px; }
.box::before { content: ""; width: 17px; height: 17px; border: 2px solid #a5a5a5; background: linear-gradient(#eee, #eee) center / 9px 2px no-repeat #1e1e1e; }
.bar { background: linear-gradient(#a5a5a5, #a5a5a5) 13px 0 / 2px 100% no-repeat; }
.bar.end { background: linear-gradient(#a5a5a5, #a5a5a5) 13px 0 / 2px 100% no-repeat, linear-gradient(#a5a5a5, #a5a5a5) 13px 100% / 8px 2px no-repeat; }
.guide { background: repeating-linear-gradient(#777 0 6px, transparent 6px 11px) 5px 0 / 2px 100% no-repeat; }
.code s { text-decoration: none; color: #808080; }
.code q { quotes: none; color: #569cd6; }
.code q::before, .code q::after { content: none; }
.code dfn { font-style: normal; color: #9cdcfe; }
.code var { font-style: normal; color: #d69d85; }
.code a { color: #569cd6; text-underline-offset: 4px; }
.row .current { margin: 0 3px 0 -2px; border: 3px solid #464646; }
.current::before { content: ""; display: block; width: 1px; height: 100%; background: #ddd; }
.scroll { position: relative; display: flex; flex-direction: column; align-items: center; background: #3e3e42; }
.split { width: 25px; height: 27px; background: #1e1e1e; }
.up { margin: 8px 0 6px; }
.thumb { width: 15px; height: 717px; background: #686868; }
.down { margin: auto 0 7px; }
.marks { position: absolute; left: 0; top: 139px; }
.editor-foot { display: flex; align-items: center; height: 20px; background: #3e3e42; white-space: nowrap; }
.zoom { gap: 24px; width: 75px; height: 18px; background: #333337; margin-right: 30px; }
.editor-foot span { margin-left: 5px; }
.hl { margin-left: 96px; }
.hr { margin-left: auto; margin-right: 28px; }
.editor-foot .stat { margin: 0 12px 0 10px; }

.env { height: 752px; }
.add-env { display: block; height: 29px; line-height: 27px; text-align: left; padding: 0 0 0 7px; background: #2d2d30; }
.env-item { display: flex; justify-content: space-between; align-items: center; height: 45px; padding: 0 5px 0 12px; background: #007acc; }
.env-item strong, .env-item small { display: block; line-height: 17px; }
.env-item small { font-size: 12px; margin-left: 2px; }
.env-item button { width: 38px; height: 38px; background: #2d2d30; border: 1px solid #434346; }
.lime { color: #c5d67a; }
.pale-icon { color: #ccc; }
.overview { display: flex; align-items: center; margin: 174px 3px 0; height: 38px; padding: 0 8px 0 9px; background: #333337; border: 2px solid #434346; }
.overview select { appearance: none; flex: 1; border: 0; padding: 0; background: none; color: #f1f1f1; font: inherit; }
.env-list { display: flex; flex-direction: column; padding: 12px 0 0 11px; }
.env-row { display: flex; align-items: center; gap: 5px; height: 35px; color: #0097fb; text-decoration: none; white-space: nowrap; }
.default { height: 44px; color: #f1f1f1; white-space: normal; line-height: 19px; align-items: center; }
.visit { gap: 6px; margin: 10px 0 0 -1px; height: 38px; }
.visit + .env-row { height: 44px; }
.sub { margin-left: 8px; height: 28px; }
.check { color: #f1f1f1; margin-left: 4px; height: 44px; gap: 7px; }
.check input { appearance: none; width: 22px; height: 22px; margin: 0; background: #333337; border: 2px solid #3f3f46; }
.shell { height: 30px; margin-bottom: 9px; }
.right .tabs button { padding: 0 6px 0 8px; }
.right .tabs { justify-content: space-between; }
.right .tabs .on { padding: 0 6px 0 5px; }
.props { flex: 1; margin-top: 8px; }
.props-pick { display: flex; align-items: center; justify-content: flex-end; height: 27px; padding-right: 3px; background: #333337; }
.props-tools { display: flex; align-items: center; gap: 6px; height: 33px; padding-left: 2px; background: #2d2d30; }
.props-tools button { width: 28px; height: 28px; }
.props-tools .sep { margin: 0 -4px 0 0; }
.props-tools .sel { border: 2px solid #3399ff; }
.props-body { flex: 1; }

.statusbar { display: flex; align-items: center; gap: 12px; height: 29px; margin-top: 7px; padding: 0 18px 0 5px; background: #007acc; }
.bell { margin-left: auto; }
.badge { font-size: 12px; fill: #fff; }
.taskbar { display: flex; align-items: stretch; height: 50px; background: #1b2224; white-space: nowrap; }
.taskbar > button { width: 57px; }
.taskbar > .find { width: 67px; }
.taskbar > .small { width: 57px; }
.taskbar > .win { width: 144px; margin: 0 6px 0 5px; padding: 0 0 0 5px; gap: 7px; justify-content: flex-start; border-bottom: 3px solid #b5b8b2; }
.taskbar > .active { width: 153px; margin: 0; padding-left: 10px; gap: 5px; background: #4b4f50; }
.taskbar > .spotify { width: 152px; margin: 0; padding-left: 10px; background: #a3602a; border-color: #ff7b00; }
.glyph { font-size: 13px; font-weight: 700; fill: #fff; }
.pale { fill: #9fd3ff; }
.three { font: 700 20px "Open Sans", sans-serif; fill: #189a9a; }
.count { font-size: 16px; fill: #fff; }
.tray { flex: 1; display: flex; align-items: center; gap: 10px; padding-left: 12px; }
.pen { margin-left: 8px; }
.clock { width: 80px; margin-left: 3px; display: flex; flex-direction: column; align-items: center; line-height: 22px; }
.action { margin-left: 4px; }

.ink { position: absolute; inset: 0; width: 100%; height: 100%; overflow: visible; pointer-events: none; }
.hand { position: absolute; color: #f00; font-family: Lato, sans-serif; line-height: 80px; white-space: nowrap; }
.ide-hand { font-size: 66px; line-height: 66px; display: flex; }
.upper { left: 1270px; top: 428px; gap: 64px; rotate: -3deg; }
.lower { left: 1241px; top: 533px; gap: 64px; }

/* photo viewer */
.photos { position: relative; margin: 133px 141px 0 196px; height: 1102px; background: #fefefe; border-top: 3px solid #c8c4c8; color: #222; font-size: 15px; }
.photo-bar { display: grid; grid-template-columns: 1fr auto 1fr; height: 67px; padding-left: 5px; margin-left: -5px; }
.photo-left, .photo-mid, .photo-right { display: flex; }
.photo-right { position: relative; justify-content: flex-end; }
.all { width: 271px; gap: 11px; background: #857140; color: #fff; }
.add { margin-left: 18px; gap: 10px; }
.photo-mid button { width: 88px; }
.edit { gap: 12px; margin-right: 8px; }
.pay { width: 130px; }
.print { width: 66px; }
.more { width: 63px; }
.bat { position: absolute; right: 108px; top: 25px; }
.bat-text { font-size: 8px; fill: #8a6a20; }
.diagram { position: absolute; inset: 0; color: #111; }
.node { position: absolute; border: 13px solid #000; white-space: nowrap; font-size: 45px; line-height: 50px; }
.node span { display: block; }
.round { border-radius: 37px; }
.red { border-color: #960f1f; font-size: 36px; line-height: 40px; }
.n-header { left: 577px; top: 171px; width: 976px; height: 95px; font-size: 55px; }
.n-header span { padding: 5px 0 0 327px; }
.n-nav { left: 584px; top: 317px; width: 170px; height: 395px; }
.n-nav span { padding: 159px 0 0 18px; }
.n-main { left: 789px; top: 331px; width: 547px; height: 372px; }
.n-aside { left: 1355px; top: 342px; width: 213px; height: 354px; }
.n-aside span { padding: 162px 0 0 25px; }
.n-in-header { left: 872px; top: 382px; width: 387px; height: 75px; }
.n-in-header span { padding: 6px 0 0 35px; }
.n-article { left: 879px; top: 487px; width: 375px; height: 114px; }
.n-article span { padding: 42px 0 0 47px; }
.n-in-footer { left: 884px; top: 625px; width: 373px; height: 55px; line-height: 36px; }
.n-in-footer span { padding: 0 0 0 50px; }
.n-footer { left: 587px; top: 741px; width: 980px; height: 143px; }
.n-footer span { padding: 35px 0 0 270px; }
.cloud { position: absolute; left: 1194px; top: 127px; }
.section-label { position: absolute; left: 1280px; top: 196px; font-size: 40px; line-height: 50px; }
.cursor { position: absolute; left: 1517px; top: 375px; }
.corner { position: absolute; right: 20px; bottom: 0; }
.photos .ink { top: -3px; height: 1102px; }
.genel { left: 27px; top: 139px; font-size: 84px; rotate: -15deg; }
.sayfa { left: 308px; top: 50px; font-size: 84px; rotate: -17deg; }
.yapisi { left: 550px; top: 4px; font-size: 64px; rotate: -13deg; }
```
